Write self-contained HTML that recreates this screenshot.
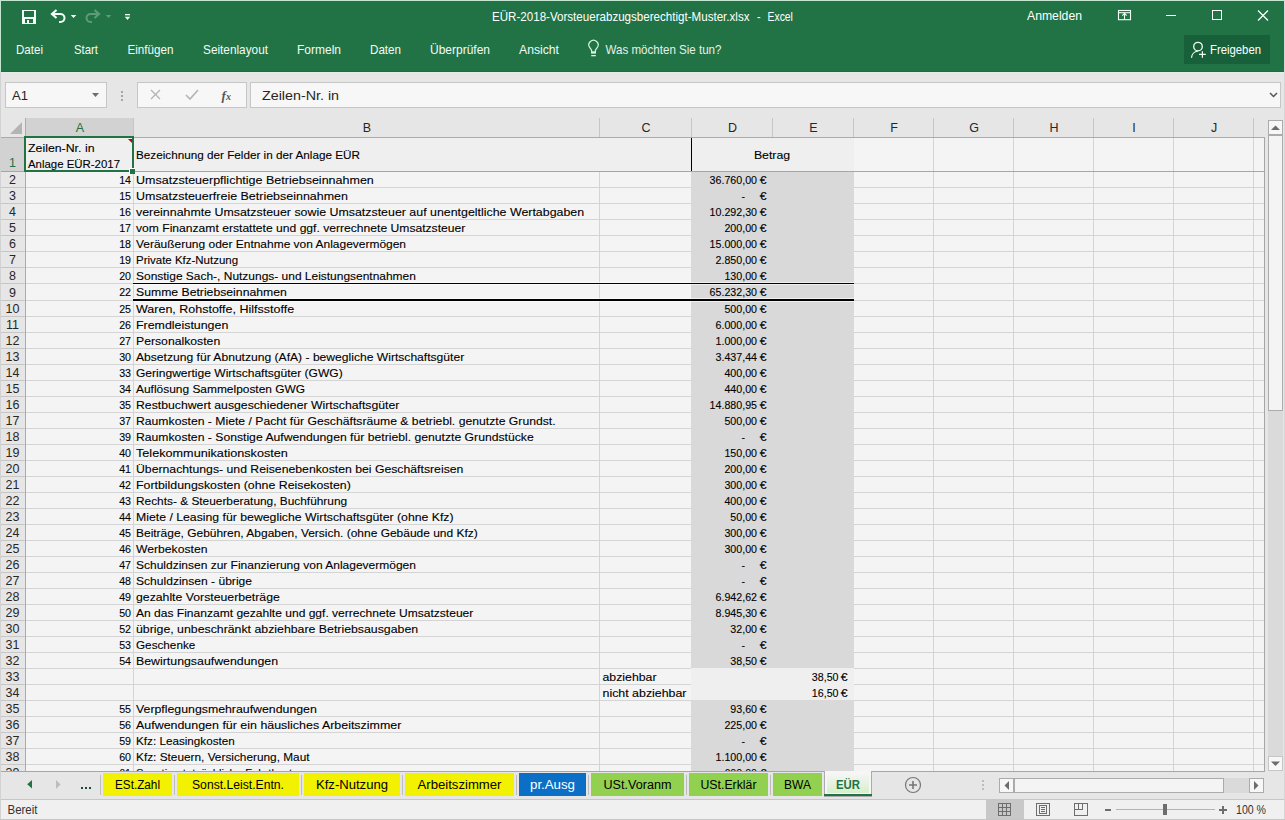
<!DOCTYPE html>
<html><head><meta charset="utf-8"><title>Excel</title>
<style>html,body{margin:0;padding:0;width:1285px;height:820px;overflow:hidden;background:#e6e6e6}
svg{display:block;font-family:"Liberation Sans",sans-serif}</style></head>
<body><svg width="1285" height="820" viewBox="0 0 1285 820">
<rect x="0" y="0" width="1285" height="820" fill="#e6e6e6" />
<rect x="0" y="0" width="1285" height="1" fill="#c3e6d0" />
<rect x="0" y="0" width="1" height="72" fill="#c3e6d0" />
<rect x="1" y="1" width="1283" height="71" fill="#217346" />
<rect x="1284" y="0" width="1" height="820" fill="#d6d6d6" />
<rect x="1" y="71" width="1283" height="1" fill="#1f6b42" />
<rect x="1" y="72" width="1283" height="1" fill="#e2efe6" />
<rect x="0" y="72" width="1" height="748" fill="#d2d2d2" />
<g shape-rendering="crispEdges"><rect x="22" y="10" width="14" height="14" fill="#f4fff8"/><rect x="24" y="11" width="10" height="6" fill="#217346"/><rect x="25" y="19" width="8" height="4" fill="#217346"/><rect x="27" y="20" width="2" height="3" fill="#f4fff8"/></g>
<path d="M52 14 h8.5 a4 4 0 0 1 0 8 h-1.5" fill="none" stroke="#f4fff8" stroke-width="2"/><path d="M56.5 10 L52 14 L56.5 18" fill="none" stroke="#f4fff8" stroke-width="2.2"/>
<path d="M70.8 15h5.5l-2.75 3z" fill="#f4fff8"/>
<path d="M99 14 h-8.5 a4 4 0 0 0 0 8 h1.5" fill="none" stroke="#5d9c77" stroke-width="2"/><path d="M94.5 10 L99 14 L94.5 18" fill="none" stroke="#5d9c77" stroke-width="2.2"/>
<path d="M105.8 15h5.5l-2.75 3z" fill="#5d9c77"/>
<rect x="125" y="14" width="5" height="1.3" fill="#f0fff5"/><path d="M124.8 16.8h5.4l-2.7 3.2z" fill="#f0fff5"/>
<text x="492" y="21" font-size="13" fill="#fff" textLength="257.5" lengthAdjust="spacingAndGlyphs" >EÜR-2018-Vorsteuerabzugsberechtigt-Muster.xlsx</text>
<text x="757" y="21" font-size="13" fill="#fff" textLength="3.6" lengthAdjust="spacingAndGlyphs" >-</text>
<text x="767.6" y="21" font-size="13" fill="#fff" textLength="25.3" lengthAdjust="spacingAndGlyphs" >Excel</text>
<text x="1027" y="20" font-size="13" fill="#fff" textLength="55" lengthAdjust="spacingAndGlyphs" >Anmelden</text>
<g fill="none" stroke="#f0fff5" stroke-width="1.1"><rect x="1118.5" y="10.5" width="12" height="9.2"/><path d="M1119 12.7h11"/><path d="M1124.5 19.5v-6.3 M1122.3 15.6l2.2-2.2 2.2 2.2"/></g>
<rect x="1166" y="15" width="10" height="1" fill="#fff" />
<rect x="1212.5" y="10.5" width="9" height="9" fill="none" stroke="#fff"/>
<path d="M1258 10.5 L1268 20.5 M1268 10.5 L1258 20.5" stroke="#fff" stroke-width="1.2"/>
<text x="16" y="54" font-size="13" fill="#f2fbf5" textLength="27" lengthAdjust="spacingAndGlyphs" >Datei</text>
<text x="74" y="54" font-size="13" fill="#f2fbf5" textLength="24" lengthAdjust="spacingAndGlyphs" >Start</text>
<text x="127.5" y="54" font-size="13" fill="#f2fbf5" textLength="46.0" lengthAdjust="spacingAndGlyphs" >Einfügen</text>
<text x="203" y="54" font-size="13" fill="#f2fbf5" textLength="65" lengthAdjust="spacingAndGlyphs" >Seitenlayout</text>
<text x="297" y="54" font-size="13" fill="#f2fbf5" textLength="44" lengthAdjust="spacingAndGlyphs" >Formeln</text>
<text x="370" y="54" font-size="13" fill="#f2fbf5" textLength="31" lengthAdjust="spacingAndGlyphs" >Daten</text>
<text x="430" y="54" font-size="13" fill="#f2fbf5" textLength="60" lengthAdjust="spacingAndGlyphs" >Überprüfen</text>
<text x="519" y="54" font-size="13" fill="#f2fbf5" textLength="40" lengthAdjust="spacingAndGlyphs" >Ansicht</text>
<path d="M591.6 52 V50.2 L589.8 47.6 A4.6 4.6 0 1 1 597.2 47.6 L595.4 50.2 V52 Z" fill="none" stroke="#d8f5e3" stroke-width="1.2"/><rect x="591" y="51.6" width="5" height="2" fill="#d8f5e3"/><rect x="591.2" y="55" width="4.6" height="1.3" fill="#d8f5e3"/>
<text x="605.5" y="54" font-size="13" fill="#e8f0ea" textLength="116" lengthAdjust="spacingAndGlyphs" >Was möchten Sie tun?</text>
<rect x="1184" y="35" width="86" height="29" fill="#17603a" />
<circle cx="1198" cy="46.6" r="4.3" fill="none" stroke="#effff4" stroke-width="1.3"/><path d="M1191.5 57.8 A7 7 0 0 1 1197.8 51.2" fill="none" stroke="#effff4" stroke-width="1.3"/><path d="M1202.4 51.2v6.6 M1199 54.4h6.8" stroke="#effff4" stroke-width="1.2"/>
<text x="1210" y="54" font-size="13" fill="#fff" textLength="51" lengthAdjust="spacingAndGlyphs" >Freigeben</text>
<rect x="5" y="82" width="102" height="26" fill="#c6c6c6" />
<rect x="6" y="83" width="100" height="24" fill="#f7f7f7" />
<text x="12" y="100" font-size="13" fill="#262626" textLength="16" lengthAdjust="spacingAndGlyphs" >A1</text>
<path d="M92 93h7l-3.5 4z" fill="#6d6d6d"/>
<rect x="121" y="91" width="2" height="2" fill="#a6a6a6" />
<rect x="121" y="95" width="2" height="2" fill="#a6a6a6" />
<rect x="121" y="99" width="2" height="2" fill="#a6a6a6" />
<rect x="137" y="82" width="110" height="26" fill="#c6c6c6" />
<rect x="138" y="83" width="108" height="24" fill="#f7f7f7" />
<path d="M151 90 L160 99 M160 90 L151 99" stroke="#b4b4b4" stroke-width="1.3"/>
<path d="M186 95 L190 99 L198 90" fill="none" stroke="#b4b4b4" stroke-width="1.6"/>
<text x="221.5" y="100" font-family="Liberation Serif" font-style="italic" font-weight="bold" font-size="13" fill="#555">f</text><text x="226" y="100" font-family="Liberation Serif" font-style="italic" font-weight="bold" font-size="10" fill="#555">x</text>
<rect x="250" y="82" width="1031" height="26" fill="#c6c6c6" />
<rect x="251" y="83" width="1029" height="24" fill="#f7f7f7" />
<text x="262" y="100" font-size="13" fill="#262626" textLength="77" lengthAdjust="spacingAndGlyphs" >Zeilen-Nr. in</text>
<path d="M1270 93l3.5 3.5 3.5-3.5" fill="none" stroke="#555" stroke-width="1.5"/>
<rect x="1" y="118" width="1263" height="19" fill="#e6e6e6" />
<rect x="25" y="118" width="108" height="19" fill="#d2d2d2" />
<path d="M22 122 L22 134 L10 134 Z" fill="#b4b4b4"/>
<rect x="1" y="138" width="1263" height="633" fill="#f4f4f4" />
<rect x="1" y="138" width="24" height="633" fill="#e6e6e6" />
<rect x="1" y="138" width="24" height="33" fill="#d2d2d2" />
<rect x="26" y="138" width="665" height="33" fill="#efefef" />
<rect x="692" y="138" width="162" height="33" fill="#efefef" />
<rect x="691" y="172" width="163" height="496" fill="#d9d9d9" />
<rect x="691" y="700" width="163" height="71" fill="#d9d9d9" />
<rect x="691" y="668" width="163" height="32" fill="#efefef" />
<rect x="26" y="187" width="665" height="1" fill="#d4d4d4" />
<rect x="854" y="187" width="410" height="1" fill="#d4d4d4" />
<rect x="1" y="187" width="24" height="1" fill="#c6c6c6" />
<rect x="26" y="203" width="665" height="1" fill="#d4d4d4" />
<rect x="854" y="203" width="410" height="1" fill="#d4d4d4" />
<rect x="1" y="203" width="24" height="1" fill="#c6c6c6" />
<rect x="26" y="219" width="665" height="1" fill="#d4d4d4" />
<rect x="854" y="219" width="410" height="1" fill="#d4d4d4" />
<rect x="1" y="219" width="24" height="1" fill="#c6c6c6" />
<rect x="26" y="235" width="665" height="1" fill="#d4d4d4" />
<rect x="854" y="235" width="410" height="1" fill="#d4d4d4" />
<rect x="1" y="235" width="24" height="1" fill="#c6c6c6" />
<rect x="26" y="251" width="665" height="1" fill="#d4d4d4" />
<rect x="854" y="251" width="410" height="1" fill="#d4d4d4" />
<rect x="1" y="251" width="24" height="1" fill="#c6c6c6" />
<rect x="26" y="267" width="665" height="1" fill="#d4d4d4" />
<rect x="854" y="267" width="410" height="1" fill="#d4d4d4" />
<rect x="1" y="267" width="24" height="1" fill="#c6c6c6" />
<rect x="26" y="283" width="665" height="1" fill="#d4d4d4" />
<rect x="854" y="283" width="410" height="1" fill="#d4d4d4" />
<rect x="1" y="283" width="24" height="1" fill="#c6c6c6" />
<rect x="26" y="300" width="665" height="1" fill="#d4d4d4" />
<rect x="854" y="300" width="410" height="1" fill="#d4d4d4" />
<rect x="1" y="300" width="24" height="1" fill="#c6c6c6" />
<rect x="26" y="316" width="665" height="1" fill="#d4d4d4" />
<rect x="854" y="316" width="410" height="1" fill="#d4d4d4" />
<rect x="1" y="316" width="24" height="1" fill="#c6c6c6" />
<rect x="26" y="332" width="665" height="1" fill="#d4d4d4" />
<rect x="854" y="332" width="410" height="1" fill="#d4d4d4" />
<rect x="1" y="332" width="24" height="1" fill="#c6c6c6" />
<rect x="26" y="348" width="665" height="1" fill="#d4d4d4" />
<rect x="854" y="348" width="410" height="1" fill="#d4d4d4" />
<rect x="1" y="348" width="24" height="1" fill="#c6c6c6" />
<rect x="26" y="364" width="665" height="1" fill="#d4d4d4" />
<rect x="854" y="364" width="410" height="1" fill="#d4d4d4" />
<rect x="1" y="364" width="24" height="1" fill="#c6c6c6" />
<rect x="26" y="380" width="665" height="1" fill="#d4d4d4" />
<rect x="854" y="380" width="410" height="1" fill="#d4d4d4" />
<rect x="1" y="380" width="24" height="1" fill="#c6c6c6" />
<rect x="26" y="396" width="665" height="1" fill="#d4d4d4" />
<rect x="854" y="396" width="410" height="1" fill="#d4d4d4" />
<rect x="1" y="396" width="24" height="1" fill="#c6c6c6" />
<rect x="26" y="412" width="665" height="1" fill="#d4d4d4" />
<rect x="854" y="412" width="410" height="1" fill="#d4d4d4" />
<rect x="1" y="412" width="24" height="1" fill="#c6c6c6" />
<rect x="26" y="428" width="665" height="1" fill="#d4d4d4" />
<rect x="854" y="428" width="410" height="1" fill="#d4d4d4" />
<rect x="1" y="428" width="24" height="1" fill="#c6c6c6" />
<rect x="26" y="444" width="665" height="1" fill="#d4d4d4" />
<rect x="854" y="444" width="410" height="1" fill="#d4d4d4" />
<rect x="1" y="444" width="24" height="1" fill="#c6c6c6" />
<rect x="26" y="460" width="665" height="1" fill="#d4d4d4" />
<rect x="854" y="460" width="410" height="1" fill="#d4d4d4" />
<rect x="1" y="460" width="24" height="1" fill="#c6c6c6" />
<rect x="26" y="476" width="665" height="1" fill="#d4d4d4" />
<rect x="854" y="476" width="410" height="1" fill="#d4d4d4" />
<rect x="1" y="476" width="24" height="1" fill="#c6c6c6" />
<rect x="26" y="492" width="665" height="1" fill="#d4d4d4" />
<rect x="854" y="492" width="410" height="1" fill="#d4d4d4" />
<rect x="1" y="492" width="24" height="1" fill="#c6c6c6" />
<rect x="26" y="508" width="665" height="1" fill="#d4d4d4" />
<rect x="854" y="508" width="410" height="1" fill="#d4d4d4" />
<rect x="1" y="508" width="24" height="1" fill="#c6c6c6" />
<rect x="26" y="524" width="665" height="1" fill="#d4d4d4" />
<rect x="854" y="524" width="410" height="1" fill="#d4d4d4" />
<rect x="1" y="524" width="24" height="1" fill="#c6c6c6" />
<rect x="26" y="540" width="665" height="1" fill="#d4d4d4" />
<rect x="854" y="540" width="410" height="1" fill="#d4d4d4" />
<rect x="1" y="540" width="24" height="1" fill="#c6c6c6" />
<rect x="26" y="556" width="665" height="1" fill="#d4d4d4" />
<rect x="854" y="556" width="410" height="1" fill="#d4d4d4" />
<rect x="1" y="556" width="24" height="1" fill="#c6c6c6" />
<rect x="26" y="572" width="665" height="1" fill="#d4d4d4" />
<rect x="854" y="572" width="410" height="1" fill="#d4d4d4" />
<rect x="1" y="572" width="24" height="1" fill="#c6c6c6" />
<rect x="26" y="588" width="665" height="1" fill="#d4d4d4" />
<rect x="854" y="588" width="410" height="1" fill="#d4d4d4" />
<rect x="1" y="588" width="24" height="1" fill="#c6c6c6" />
<rect x="26" y="604" width="665" height="1" fill="#d4d4d4" />
<rect x="854" y="604" width="410" height="1" fill="#d4d4d4" />
<rect x="1" y="604" width="24" height="1" fill="#c6c6c6" />
<rect x="26" y="620" width="665" height="1" fill="#d4d4d4" />
<rect x="854" y="620" width="410" height="1" fill="#d4d4d4" />
<rect x="1" y="620" width="24" height="1" fill="#c6c6c6" />
<rect x="26" y="636" width="665" height="1" fill="#d4d4d4" />
<rect x="854" y="636" width="410" height="1" fill="#d4d4d4" />
<rect x="1" y="636" width="24" height="1" fill="#c6c6c6" />
<rect x="26" y="652" width="665" height="1" fill="#d4d4d4" />
<rect x="854" y="652" width="410" height="1" fill="#d4d4d4" />
<rect x="1" y="652" width="24" height="1" fill="#c6c6c6" />
<rect x="26" y="668" width="665" height="1" fill="#d4d4d4" />
<rect x="854" y="668" width="410" height="1" fill="#d4d4d4" />
<rect x="1" y="668" width="24" height="1" fill="#c6c6c6" />
<rect x="26" y="684" width="665" height="1" fill="#d4d4d4" />
<rect x="854" y="684" width="410" height="1" fill="#d4d4d4" />
<rect x="1" y="684" width="24" height="1" fill="#c6c6c6" />
<rect x="26" y="700" width="665" height="1" fill="#d4d4d4" />
<rect x="854" y="700" width="410" height="1" fill="#d4d4d4" />
<rect x="1" y="700" width="24" height="1" fill="#c6c6c6" />
<rect x="26" y="716" width="665" height="1" fill="#d4d4d4" />
<rect x="854" y="716" width="410" height="1" fill="#d4d4d4" />
<rect x="1" y="716" width="24" height="1" fill="#c6c6c6" />
<rect x="26" y="732" width="665" height="1" fill="#d4d4d4" />
<rect x="854" y="732" width="410" height="1" fill="#d4d4d4" />
<rect x="1" y="732" width="24" height="1" fill="#c6c6c6" />
<rect x="26" y="748" width="665" height="1" fill="#d4d4d4" />
<rect x="854" y="748" width="410" height="1" fill="#d4d4d4" />
<rect x="1" y="748" width="24" height="1" fill="#c6c6c6" />
<rect x="26" y="764" width="665" height="1" fill="#d4d4d4" />
<rect x="854" y="764" width="410" height="1" fill="#d4d4d4" />
<rect x="1" y="764" width="24" height="1" fill="#c6c6c6" />
<rect x="133" y="138" width="1" height="633" fill="#d4d4d4" />
<rect x="599" y="172" width="1" height="599" fill="#d4d4d4" />
<rect x="933" y="138" width="1" height="633" fill="#d4d4d4" />
<rect x="1013" y="138" width="1" height="633" fill="#d4d4d4" />
<rect x="1093" y="138" width="1" height="633" fill="#d4d4d4" />
<rect x="1173" y="138" width="1" height="633" fill="#d4d4d4" />
<rect x="1253" y="138" width="1" height="633" fill="#d4d4d4" />
<rect x="133" y="118" width="1" height="19" fill="#c6c6c6" />
<rect x="599" y="118" width="1" height="19" fill="#c6c6c6" />
<rect x="691" y="118" width="1" height="19" fill="#c6c6c6" />
<rect x="772" y="118" width="1" height="19" fill="#c6c6c6" />
<rect x="853" y="118" width="1" height="19" fill="#c6c6c6" />
<rect x="933" y="118" width="1" height="19" fill="#c6c6c6" />
<rect x="1013" y="118" width="1" height="19" fill="#c6c6c6" />
<rect x="1093" y="118" width="1" height="19" fill="#c6c6c6" />
<rect x="1173" y="118" width="1" height="19" fill="#c6c6c6" />
<rect x="1253" y="118" width="1" height="19" fill="#c6c6c6" />
<rect x="25" y="118" width="1" height="653" fill="#ababab" />
<rect x="1" y="137" width="1263" height="1" fill="#ababab" />
<rect x="1" y="171" width="1263" height="1" fill="#a6a6a6" />
<rect x="1264" y="137" width="1" height="635" fill="#a6a6a6" />
<rect x="1" y="771" width="1264" height="1" fill="#a6a6a6" />
<rect x="691" y="138" width="1" height="33" fill="#000" />
<rect x="133" y="282" width="721" height="1" fill="#ffffff" fill-opacity="0.6"/>
<rect x="133" y="284" width="721" height="1" fill="#ffffff" fill-opacity="0.6"/>
<rect x="133" y="298" width="721" height="1" fill="#ffffff" fill-opacity="0.6"/>
<rect x="133" y="301" width="721" height="1" fill="#ffffff" fill-opacity="0.6"/>
<rect x="133" y="283" width="721" height="1" fill="#000" />
<rect x="133" y="299" width="721" height="2" fill="#000" />
<text x="80.0" y="132" font-size="12.5" fill="#217346" text-anchor="middle" >A</text>
<text x="367.0" y="132" font-size="12.5" fill="#262626" text-anchor="middle" >B</text>
<text x="646.0" y="132" font-size="12.5" fill="#262626" text-anchor="middle" >C</text>
<text x="732.5" y="132" font-size="12.5" fill="#262626" text-anchor="middle" >D</text>
<text x="813.5" y="132" font-size="12.5" fill="#262626" text-anchor="middle" >E</text>
<text x="894.0" y="132" font-size="12.5" fill="#262626" text-anchor="middle" >F</text>
<text x="974.0" y="132" font-size="12.5" fill="#262626" text-anchor="middle" >G</text>
<text x="1054.0" y="132" font-size="12.5" fill="#262626" text-anchor="middle" >H</text>
<text x="1134.0" y="132" font-size="12.5" fill="#262626" text-anchor="middle" >I</text>
<text x="1214.0" y="132" font-size="12.5" fill="#262626" text-anchor="middle" >J</text>
<text x="12.5" y="167" font-size="12.5" fill="#217346" text-anchor="middle" >1</text>
<text x="12.5" y="184" font-size="12.5" fill="#262626" text-anchor="middle" >2</text>
<text x="12.5" y="200" font-size="12.5" fill="#262626" text-anchor="middle" >3</text>
<text x="12.5" y="216" font-size="12.5" fill="#262626" text-anchor="middle" >4</text>
<text x="12.5" y="232" font-size="12.5" fill="#262626" text-anchor="middle" >5</text>
<text x="12.5" y="248" font-size="12.5" fill="#262626" text-anchor="middle" >6</text>
<text x="12.5" y="264" font-size="12.5" fill="#262626" text-anchor="middle" >7</text>
<text x="12.5" y="280" font-size="12.5" fill="#262626" text-anchor="middle" >8</text>
<text x="12.5" y="297" font-size="12.5" fill="#262626" text-anchor="middle" >9</text>
<text x="12.5" y="313" font-size="12.5" fill="#262626" text-anchor="middle" >10</text>
<text x="12.5" y="329" font-size="12.5" fill="#262626" text-anchor="middle" >11</text>
<text x="12.5" y="345" font-size="12.5" fill="#262626" text-anchor="middle" >12</text>
<text x="12.5" y="361" font-size="12.5" fill="#262626" text-anchor="middle" >13</text>
<text x="12.5" y="377" font-size="12.5" fill="#262626" text-anchor="middle" >14</text>
<text x="12.5" y="393" font-size="12.5" fill="#262626" text-anchor="middle" >15</text>
<text x="12.5" y="409" font-size="12.5" fill="#262626" text-anchor="middle" >16</text>
<text x="12.5" y="425" font-size="12.5" fill="#262626" text-anchor="middle" >17</text>
<text x="12.5" y="441" font-size="12.5" fill="#262626" text-anchor="middle" >18</text>
<text x="12.5" y="457" font-size="12.5" fill="#262626" text-anchor="middle" >19</text>
<text x="12.5" y="473" font-size="12.5" fill="#262626" text-anchor="middle" >20</text>
<text x="12.5" y="489" font-size="12.5" fill="#262626" text-anchor="middle" >21</text>
<text x="12.5" y="505" font-size="12.5" fill="#262626" text-anchor="middle" >22</text>
<text x="12.5" y="521" font-size="12.5" fill="#262626" text-anchor="middle" >23</text>
<text x="12.5" y="537" font-size="12.5" fill="#262626" text-anchor="middle" >24</text>
<text x="12.5" y="553" font-size="12.5" fill="#262626" text-anchor="middle" >25</text>
<text x="12.5" y="569" font-size="12.5" fill="#262626" text-anchor="middle" >26</text>
<text x="12.5" y="585" font-size="12.5" fill="#262626" text-anchor="middle" >27</text>
<text x="12.5" y="601" font-size="12.5" fill="#262626" text-anchor="middle" >28</text>
<text x="12.5" y="617" font-size="12.5" fill="#262626" text-anchor="middle" >29</text>
<text x="12.5" y="633" font-size="12.5" fill="#262626" text-anchor="middle" >30</text>
<text x="12.5" y="649" font-size="12.5" fill="#262626" text-anchor="middle" >31</text>
<text x="12.5" y="665" font-size="12.5" fill="#262626" text-anchor="middle" >32</text>
<text x="12.5" y="681" font-size="12.5" fill="#262626" text-anchor="middle" >33</text>
<text x="12.5" y="697" font-size="12.5" fill="#262626" text-anchor="middle" >34</text>
<text x="12.5" y="713" font-size="12.5" fill="#262626" text-anchor="middle" >35</text>
<text x="12.5" y="729" font-size="12.5" fill="#262626" text-anchor="middle" >36</text>
<text x="12.5" y="745" font-size="12.5" fill="#262626" text-anchor="middle" >37</text>
<text x="12.5" y="761" font-size="12.5" fill="#262626" text-anchor="middle" >38</text>
<text x="12.5" y="777" font-size="12.5" fill="#262626" text-anchor="middle" >39</text>
<text transform="translate(131 184) scale(0.97 1)" font-size="11" fill="#000" text-anchor="end" stroke="#000" stroke-width="0.1">14</text>
<text x="136" y="184" font-size="11" fill="#000" textLength="237.8" lengthAdjust="spacingAndGlyphs" stroke="#000" stroke-width="0.1">Umsatzsteuerpflichtige Betriebseinnahmen</text>
<text transform="translate(766.5 184) scale(1.12 1)" font-size="11" fill="#000" text-anchor="end" stroke="#000" stroke-width="0.1">€</text>
<text transform="translate(757 184) scale(0.97 1)" font-size="11" fill="#000" text-anchor="end" stroke="#000" stroke-width="0.1">36.760,00</text>
<text transform="translate(131 200) scale(0.97 1)" font-size="11" fill="#000" text-anchor="end" stroke="#000" stroke-width="0.1">15</text>
<text x="136" y="200" font-size="11" fill="#000" textLength="211.9" lengthAdjust="spacingAndGlyphs" stroke="#000" stroke-width="0.1">Umsatzsteuerfreie Betriebseinnahmen</text>
<text transform="translate(766.5 200) scale(1.12 1)" font-size="11" fill="#000" text-anchor="end" stroke="#000" stroke-width="0.1">€</text>
<text transform="translate(745 200) scale(0.97 1)" font-size="11" fill="#000" text-anchor="end" stroke="#000" stroke-width="0.1">-</text>
<text transform="translate(131 216) scale(0.97 1)" font-size="11" fill="#000" text-anchor="end" stroke="#000" stroke-width="0.1">16</text>
<text x="136" y="216" font-size="11" fill="#000" textLength="448.1" lengthAdjust="spacingAndGlyphs" stroke="#000" stroke-width="0.1">vereinnahmte Umsatzsteuer sowie Umsatzsteuer auf unentgeltliche Wertabgaben</text>
<text transform="translate(766.5 216) scale(1.12 1)" font-size="11" fill="#000" text-anchor="end" stroke="#000" stroke-width="0.1">€</text>
<text transform="translate(757 216) scale(0.97 1)" font-size="11" fill="#000" text-anchor="end" stroke="#000" stroke-width="0.1">10.292,30</text>
<text transform="translate(131 232) scale(0.97 1)" font-size="11" fill="#000" text-anchor="end" stroke="#000" stroke-width="0.1">17</text>
<text x="136" y="232" font-size="11" fill="#000" textLength="329.3" lengthAdjust="spacingAndGlyphs" stroke="#000" stroke-width="0.1">vom Finanzamt erstattete und ggf. verrechnete Umsatzsteuer</text>
<text transform="translate(766.5 232) scale(1.12 1)" font-size="11" fill="#000" text-anchor="end" stroke="#000" stroke-width="0.1">€</text>
<text transform="translate(757 232) scale(0.97 1)" font-size="11" fill="#000" text-anchor="end" stroke="#000" stroke-width="0.1">200,00</text>
<text transform="translate(131 248) scale(0.97 1)" font-size="11" fill="#000" text-anchor="end" stroke="#000" stroke-width="0.1">18</text>
<text x="136" y="248" font-size="11" fill="#000" textLength="270.0" lengthAdjust="spacingAndGlyphs" stroke="#000" stroke-width="0.1">Veräußerung oder Entnahme von Anlagevermögen</text>
<text transform="translate(766.5 248) scale(1.12 1)" font-size="11" fill="#000" text-anchor="end" stroke="#000" stroke-width="0.1">€</text>
<text transform="translate(757 248) scale(0.97 1)" font-size="11" fill="#000" text-anchor="end" stroke="#000" stroke-width="0.1">15.000,00</text>
<text transform="translate(131 264) scale(0.97 1)" font-size="11" fill="#000" text-anchor="end" stroke="#000" stroke-width="0.1">19</text>
<text x="136" y="264" font-size="11" fill="#000" textLength="102.1" lengthAdjust="spacingAndGlyphs" stroke="#000" stroke-width="0.1">Private Kfz-Nutzung</text>
<text transform="translate(766.5 264) scale(1.12 1)" font-size="11" fill="#000" text-anchor="end" stroke="#000" stroke-width="0.1">€</text>
<text transform="translate(757 264) scale(0.97 1)" font-size="11" fill="#000" text-anchor="end" stroke="#000" stroke-width="0.1">2.850,00</text>
<text transform="translate(131 280) scale(0.97 1)" font-size="11" fill="#000" text-anchor="end" stroke="#000" stroke-width="0.1">20</text>
<text x="136" y="280" font-size="11" fill="#000" textLength="279.9" lengthAdjust="spacingAndGlyphs" stroke="#000" stroke-width="0.1">Sonstige Sach-, Nutzungs- und Leistungsentnahmen</text>
<text transform="translate(766.5 280) scale(1.12 1)" font-size="11" fill="#000" text-anchor="end" stroke="#000" stroke-width="0.1">€</text>
<text transform="translate(757 280) scale(0.97 1)" font-size="11" fill="#000" text-anchor="end" stroke="#000" stroke-width="0.1">130,00</text>
<text transform="translate(131 296) scale(0.97 1)" font-size="11" fill="#000" text-anchor="end" stroke="#000" stroke-width="0.1">22</text>
<text x="136" y="296" font-size="11" fill="#000" textLength="150.8" lengthAdjust="spacingAndGlyphs" stroke="#000" stroke-width="0.1">Summe Betriebseinnahmen</text>
<text transform="translate(766.5 296) scale(1.12 1)" font-size="11" fill="#000" text-anchor="end" stroke="#000" stroke-width="0.1">€</text>
<text transform="translate(757 296) scale(0.97 1)" font-size="11" fill="#000" text-anchor="end" stroke="#000" stroke-width="0.1">65.232,30</text>
<text transform="translate(131 313) scale(0.97 1)" font-size="11" fill="#000" text-anchor="end" stroke="#000" stroke-width="0.1">25</text>
<text x="136" y="313" font-size="11" fill="#000" textLength="158.1" lengthAdjust="spacingAndGlyphs" stroke="#000" stroke-width="0.1">Waren, Rohstoffe, Hilfsstoffe</text>
<text transform="translate(766.5 313) scale(1.12 1)" font-size="11" fill="#000" text-anchor="end" stroke="#000" stroke-width="0.1">€</text>
<text transform="translate(757 313) scale(0.97 1)" font-size="11" fill="#000" text-anchor="end" stroke="#000" stroke-width="0.1">500,00</text>
<text transform="translate(131 329) scale(0.97 1)" font-size="11" fill="#000" text-anchor="end" stroke="#000" stroke-width="0.1">26</text>
<text x="136" y="329" font-size="11" fill="#000" textLength="92.3" lengthAdjust="spacingAndGlyphs" stroke="#000" stroke-width="0.1">Fremdleistungen</text>
<text transform="translate(766.5 329) scale(1.12 1)" font-size="11" fill="#000" text-anchor="end" stroke="#000" stroke-width="0.1">€</text>
<text transform="translate(757 329) scale(0.97 1)" font-size="11" fill="#000" text-anchor="end" stroke="#000" stroke-width="0.1">6.000,00</text>
<text transform="translate(131 345) scale(0.97 1)" font-size="11" fill="#000" text-anchor="end" stroke="#000" stroke-width="0.1">27</text>
<text x="136" y="345" font-size="11" fill="#000" textLength="84.2" lengthAdjust="spacingAndGlyphs" stroke="#000" stroke-width="0.1">Personalkosten</text>
<text transform="translate(766.5 345) scale(1.12 1)" font-size="11" fill="#000" text-anchor="end" stroke="#000" stroke-width="0.1">€</text>
<text transform="translate(757 345) scale(0.97 1)" font-size="11" fill="#000" text-anchor="end" stroke="#000" stroke-width="0.1">1.000,00</text>
<text transform="translate(131 361) scale(0.97 1)" font-size="11" fill="#000" text-anchor="end" stroke="#000" stroke-width="0.1">30</text>
<text x="136" y="361" font-size="11" fill="#000" textLength="328.2" lengthAdjust="spacingAndGlyphs" stroke="#000" stroke-width="0.1">Absetzung für Abnutzung (AfA) - bewegliche Wirtschaftsgüter</text>
<text transform="translate(766.5 361) scale(1.12 1)" font-size="11" fill="#000" text-anchor="end" stroke="#000" stroke-width="0.1">€</text>
<text transform="translate(757 361) scale(0.97 1)" font-size="11" fill="#000" text-anchor="end" stroke="#000" stroke-width="0.1">3.437,44</text>
<text transform="translate(131 377) scale(0.97 1)" font-size="11" fill="#000" text-anchor="end" stroke="#000" stroke-width="0.1">33</text>
<text x="136" y="377" font-size="11" fill="#000" textLength="206.7" lengthAdjust="spacingAndGlyphs" stroke="#000" stroke-width="0.1">Geringwertige Wirtschaftsgüter (GWG)</text>
<text transform="translate(766.5 377) scale(1.12 1)" font-size="11" fill="#000" text-anchor="end" stroke="#000" stroke-width="0.1">€</text>
<text transform="translate(757 377) scale(0.97 1)" font-size="11" fill="#000" text-anchor="end" stroke="#000" stroke-width="0.1">400,00</text>
<text transform="translate(131 393) scale(0.97 1)" font-size="11" fill="#000" text-anchor="end" stroke="#000" stroke-width="0.1">34</text>
<text x="136" y="393" font-size="11" fill="#000" textLength="169.1" lengthAdjust="spacingAndGlyphs" stroke="#000" stroke-width="0.1">Auflösung Sammelposten GWG</text>
<text transform="translate(766.5 393) scale(1.12 1)" font-size="11" fill="#000" text-anchor="end" stroke="#000" stroke-width="0.1">€</text>
<text transform="translate(757 393) scale(0.97 1)" font-size="11" fill="#000" text-anchor="end" stroke="#000" stroke-width="0.1">440,00</text>
<text transform="translate(131 409) scale(0.97 1)" font-size="11" fill="#000" text-anchor="end" stroke="#000" stroke-width="0.1">35</text>
<text x="136" y="409" font-size="11" fill="#000" textLength="263.4" lengthAdjust="spacingAndGlyphs" stroke="#000" stroke-width="0.1">Restbuchwert ausgeschiedener Wirtschaftsgüter</text>
<text transform="translate(766.5 409) scale(1.12 1)" font-size="11" fill="#000" text-anchor="end" stroke="#000" stroke-width="0.1">€</text>
<text transform="translate(757 409) scale(0.97 1)" font-size="11" fill="#000" text-anchor="end" stroke="#000" stroke-width="0.1">14.880,95</text>
<text transform="translate(131 425) scale(0.97 1)" font-size="11" fill="#000" text-anchor="end" stroke="#000" stroke-width="0.1">37</text>
<text x="136" y="425" font-size="11" fill="#000" textLength="419.6" lengthAdjust="spacingAndGlyphs" stroke="#000" stroke-width="0.1">Raumkosten - Miete / Pacht für Geschäftsräume &amp; betriebl. genutzte Grundst.</text>
<text transform="translate(766.5 425) scale(1.12 1)" font-size="11" fill="#000" text-anchor="end" stroke="#000" stroke-width="0.1">€</text>
<text transform="translate(757 425) scale(0.97 1)" font-size="11" fill="#000" text-anchor="end" stroke="#000" stroke-width="0.1">500,00</text>
<text transform="translate(131 441) scale(0.97 1)" font-size="11" fill="#000" text-anchor="end" stroke="#000" stroke-width="0.1">39</text>
<text x="136" y="441" font-size="11" fill="#000" textLength="397.7" lengthAdjust="spacingAndGlyphs" stroke="#000" stroke-width="0.1">Raumkosten - Sonstige Aufwendungen für betriebl. genutzte Grundstücke</text>
<text transform="translate(766.5 441) scale(1.12 1)" font-size="11" fill="#000" text-anchor="end" stroke="#000" stroke-width="0.1">€</text>
<text transform="translate(745 441) scale(0.97 1)" font-size="11" fill="#000" text-anchor="end" stroke="#000" stroke-width="0.1">-</text>
<text transform="translate(131 457) scale(0.97 1)" font-size="11" fill="#000" text-anchor="end" stroke="#000" stroke-width="0.1">40</text>
<text x="136" y="457" font-size="11" fill="#000" textLength="151.9" lengthAdjust="spacingAndGlyphs" stroke="#000" stroke-width="0.1">Telekommunikationskosten</text>
<text transform="translate(766.5 457) scale(1.12 1)" font-size="11" fill="#000" text-anchor="end" stroke="#000" stroke-width="0.1">€</text>
<text transform="translate(757 457) scale(0.97 1)" font-size="11" fill="#000" text-anchor="end" stroke="#000" stroke-width="0.1">150,00</text>
<text transform="translate(131 473) scale(0.97 1)" font-size="11" fill="#000" text-anchor="end" stroke="#000" stroke-width="0.1">41</text>
<text x="136" y="473" font-size="11" fill="#000" textLength="327.4" lengthAdjust="spacingAndGlyphs" stroke="#000" stroke-width="0.1">Übernachtungs- und Reisenebenkosten bei Geschäftsreisen</text>
<text transform="translate(766.5 473) scale(1.12 1)" font-size="11" fill="#000" text-anchor="end" stroke="#000" stroke-width="0.1">€</text>
<text transform="translate(757 473) scale(0.97 1)" font-size="11" fill="#000" text-anchor="end" stroke="#000" stroke-width="0.1">200,00</text>
<text transform="translate(131 489) scale(0.97 1)" font-size="11" fill="#000" text-anchor="end" stroke="#000" stroke-width="0.1">42</text>
<text x="136" y="489" font-size="11" fill="#000" textLength="214.8" lengthAdjust="spacingAndGlyphs" stroke="#000" stroke-width="0.1">Fortbildungskosten (ohne Reisekosten)</text>
<text transform="translate(766.5 489) scale(1.12 1)" font-size="11" fill="#000" text-anchor="end" stroke="#000" stroke-width="0.1">€</text>
<text transform="translate(757 489) scale(0.97 1)" font-size="11" fill="#000" text-anchor="end" stroke="#000" stroke-width="0.1">300,00</text>
<text transform="translate(131 505) scale(0.97 1)" font-size="11" fill="#000" text-anchor="end" stroke="#000" stroke-width="0.1">43</text>
<text x="136" y="505" font-size="11" fill="#000" textLength="211.1" lengthAdjust="spacingAndGlyphs" stroke="#000" stroke-width="0.1">Rechts- &amp; Steuerberatung, Buchführung</text>
<text transform="translate(766.5 505) scale(1.12 1)" font-size="11" fill="#000" text-anchor="end" stroke="#000" stroke-width="0.1">€</text>
<text transform="translate(757 505) scale(0.97 1)" font-size="11" fill="#000" text-anchor="end" stroke="#000" stroke-width="0.1">400,00</text>
<text transform="translate(131 521) scale(0.97 1)" font-size="11" fill="#000" text-anchor="end" stroke="#000" stroke-width="0.1">44</text>
<text x="136" y="521" font-size="11" fill="#000" textLength="317.6" lengthAdjust="spacingAndGlyphs" stroke="#000" stroke-width="0.1">Miete / Leasing für bewegliche Wirtschaftsgüter (ohne Kfz)</text>
<text transform="translate(766.5 521) scale(1.12 1)" font-size="11" fill="#000" text-anchor="end" stroke="#000" stroke-width="0.1">€</text>
<text transform="translate(757 521) scale(0.97 1)" font-size="11" fill="#000" text-anchor="end" stroke="#000" stroke-width="0.1">50,00</text>
<text transform="translate(131 537) scale(0.97 1)" font-size="11" fill="#000" text-anchor="end" stroke="#000" stroke-width="0.1">45</text>
<text x="136" y="537" font-size="11" fill="#000" textLength="341.7" lengthAdjust="spacingAndGlyphs" stroke="#000" stroke-width="0.1">Beiträge, Gebühren, Abgaben, Versich. (ohne Gebäude und Kfz)</text>
<text transform="translate(766.5 537) scale(1.12 1)" font-size="11" fill="#000" text-anchor="end" stroke="#000" stroke-width="0.1">€</text>
<text transform="translate(757 537) scale(0.97 1)" font-size="11" fill="#000" text-anchor="end" stroke="#000" stroke-width="0.1">300,00</text>
<text transform="translate(131 553) scale(0.97 1)" font-size="11" fill="#000" text-anchor="end" stroke="#000" stroke-width="0.1">46</text>
<text x="136" y="553" font-size="11" fill="#000" textLength="71.4" lengthAdjust="spacingAndGlyphs" stroke="#000" stroke-width="0.1">Werbekosten</text>
<text transform="translate(766.5 553) scale(1.12 1)" font-size="11" fill="#000" text-anchor="end" stroke="#000" stroke-width="0.1">€</text>
<text transform="translate(757 553) scale(0.97 1)" font-size="11" fill="#000" text-anchor="end" stroke="#000" stroke-width="0.1">300,00</text>
<text transform="translate(131 569) scale(0.97 1)" font-size="11" fill="#000" text-anchor="end" stroke="#000" stroke-width="0.1">47</text>
<text x="136" y="569" font-size="11" fill="#000" textLength="279.9" lengthAdjust="spacingAndGlyphs" stroke="#000" stroke-width="0.1">Schuldzinsen zur Finanzierung von Anlagevermögen</text>
<text transform="translate(766.5 569) scale(1.12 1)" font-size="11" fill="#000" text-anchor="end" stroke="#000" stroke-width="0.1">€</text>
<text transform="translate(745 569) scale(0.97 1)" font-size="11" fill="#000" text-anchor="end" stroke="#000" stroke-width="0.1">-</text>
<text transform="translate(131 585) scale(0.97 1)" font-size="11" fill="#000" text-anchor="end" stroke="#000" stroke-width="0.1">48</text>
<text x="136" y="585" font-size="11" fill="#000" textLength="116.0" lengthAdjust="spacingAndGlyphs" stroke="#000" stroke-width="0.1">Schuldzinsen - übrige</text>
<text transform="translate(766.5 585) scale(1.12 1)" font-size="11" fill="#000" text-anchor="end" stroke="#000" stroke-width="0.1">€</text>
<text transform="translate(745 585) scale(0.97 1)" font-size="11" fill="#000" text-anchor="end" stroke="#000" stroke-width="0.1">-</text>
<text transform="translate(131 601) scale(0.97 1)" font-size="11" fill="#000" text-anchor="end" stroke="#000" stroke-width="0.1">49</text>
<text x="136" y="601" font-size="11" fill="#000" textLength="143.8" lengthAdjust="spacingAndGlyphs" stroke="#000" stroke-width="0.1">gezahlte Vorsteuerbeträge</text>
<text transform="translate(766.5 601) scale(1.12 1)" font-size="11" fill="#000" text-anchor="end" stroke="#000" stroke-width="0.1">€</text>
<text transform="translate(757 601) scale(0.97 1)" font-size="11" fill="#000" text-anchor="end" stroke="#000" stroke-width="0.1">6.942,62</text>
<text transform="translate(131 617) scale(0.97 1)" font-size="11" fill="#000" text-anchor="end" stroke="#000" stroke-width="0.1">50</text>
<text x="136" y="617" font-size="11" fill="#000" textLength="337.3" lengthAdjust="spacingAndGlyphs" stroke="#000" stroke-width="0.1">An das Finanzamt gezahlte und ggf. verrechnete Umsatzsteuer</text>
<text transform="translate(766.5 617) scale(1.12 1)" font-size="11" fill="#000" text-anchor="end" stroke="#000" stroke-width="0.1">€</text>
<text transform="translate(757 617) scale(0.97 1)" font-size="11" fill="#000" text-anchor="end" stroke="#000" stroke-width="0.1">8.945,30</text>
<text transform="translate(131 633) scale(0.97 1)" font-size="11" fill="#000" text-anchor="end" stroke="#000" stroke-width="0.1">52</text>
<text x="136" y="633" font-size="11" fill="#000" textLength="282.1" lengthAdjust="spacingAndGlyphs" stroke="#000" stroke-width="0.1">übrige, unbeschränkt abziehbare Betriebsausgaben</text>
<text transform="translate(766.5 633) scale(1.12 1)" font-size="11" fill="#000" text-anchor="end" stroke="#000" stroke-width="0.1">€</text>
<text transform="translate(757 633) scale(0.97 1)" font-size="11" fill="#000" text-anchor="end" stroke="#000" stroke-width="0.1">32,00</text>
<text transform="translate(131 649) scale(0.97 1)" font-size="11" fill="#000" text-anchor="end" stroke="#000" stroke-width="0.1">53</text>
<text x="136" y="649" font-size="11" fill="#000" textLength="59.3" lengthAdjust="spacingAndGlyphs" stroke="#000" stroke-width="0.1">Geschenke</text>
<text transform="translate(766.5 649) scale(1.12 1)" font-size="11" fill="#000" text-anchor="end" stroke="#000" stroke-width="0.1">€</text>
<text transform="translate(745 649) scale(0.97 1)" font-size="11" fill="#000" text-anchor="end" stroke="#000" stroke-width="0.1">-</text>
<text transform="translate(131 665) scale(0.97 1)" font-size="11" fill="#000" text-anchor="end" stroke="#000" stroke-width="0.1">54</text>
<text x="136" y="665" font-size="11" fill="#000" textLength="142.0" lengthAdjust="spacingAndGlyphs" stroke="#000" stroke-width="0.1">Bewirtungsaufwendungen</text>
<text transform="translate(766.5 665) scale(1.12 1)" font-size="11" fill="#000" text-anchor="end" stroke="#000" stroke-width="0.1">€</text>
<text transform="translate(757 665) scale(0.97 1)" font-size="11" fill="#000" text-anchor="end" stroke="#000" stroke-width="0.1">38,50</text>
<text transform="translate(131 713) scale(0.97 1)" font-size="11" fill="#000" text-anchor="end" stroke="#000" stroke-width="0.1">55</text>
<text x="136" y="713" font-size="11" fill="#000" textLength="180.8" lengthAdjust="spacingAndGlyphs" stroke="#000" stroke-width="0.1">Verpflegungsmehraufwendungen</text>
<text transform="translate(766.5 713) scale(1.12 1)" font-size="11" fill="#000" text-anchor="end" stroke="#000" stroke-width="0.1">€</text>
<text transform="translate(757 713) scale(0.97 1)" font-size="11" fill="#000" text-anchor="end" stroke="#000" stroke-width="0.1">93,60</text>
<text transform="translate(131 729) scale(0.97 1)" font-size="11" fill="#000" text-anchor="end" stroke="#000" stroke-width="0.1">56</text>
<text x="136" y="729" font-size="11" fill="#000" textLength="265.3" lengthAdjust="spacingAndGlyphs" stroke="#000" stroke-width="0.1">Aufwendungen für ein häusliches Arbeitszimmer</text>
<text transform="translate(766.5 729) scale(1.12 1)" font-size="11" fill="#000" text-anchor="end" stroke="#000" stroke-width="0.1">€</text>
<text transform="translate(757 729) scale(0.97 1)" font-size="11" fill="#000" text-anchor="end" stroke="#000" stroke-width="0.1">225,00</text>
<text transform="translate(131 745) scale(0.97 1)" font-size="11" fill="#000" text-anchor="end" stroke="#000" stroke-width="0.1">59</text>
<text x="136" y="745" font-size="11" fill="#000" textLength="98.8" lengthAdjust="spacingAndGlyphs" stroke="#000" stroke-width="0.1">Kfz: Leasingkosten</text>
<text transform="translate(766.5 745) scale(1.12 1)" font-size="11" fill="#000" text-anchor="end" stroke="#000" stroke-width="0.1">€</text>
<text transform="translate(745 745) scale(0.97 1)" font-size="11" fill="#000" text-anchor="end" stroke="#000" stroke-width="0.1">-</text>
<text transform="translate(131 761) scale(0.97 1)" font-size="11" fill="#000" text-anchor="end" stroke="#000" stroke-width="0.1">60</text>
<text x="136" y="761" font-size="11" fill="#000" textLength="173.5" lengthAdjust="spacingAndGlyphs" stroke="#000" stroke-width="0.1">Kfz: Steuern, Versicherung, Maut</text>
<text transform="translate(766.5 761) scale(1.12 1)" font-size="11" fill="#000" text-anchor="end" stroke="#000" stroke-width="0.1">€</text>
<text transform="translate(757 761) scale(0.97 1)" font-size="11" fill="#000" text-anchor="end" stroke="#000" stroke-width="0.1">1.100,00</text>
<text transform="translate(131 777) scale(0.97 1)" font-size="11" fill="#000" text-anchor="end" stroke="#000" stroke-width="0.1">61</text>
<text x="136" y="777" font-size="11" fill="#000" textLength="168.5" lengthAdjust="spacingAndGlyphs" stroke="#000" stroke-width="0.1">Sonstige tatsächliche Fahrtkosten</text>
<text transform="translate(766.5 777) scale(1.12 1)" font-size="11" fill="#000" text-anchor="end" stroke="#000" stroke-width="0.1">€</text>
<text transform="translate(757 777) scale(0.97 1)" font-size="11" fill="#000" text-anchor="end" stroke="#000" stroke-width="0.1">600,00</text>
<text x="602.5" y="681" font-size="11" fill="#000" textLength="54" lengthAdjust="spacingAndGlyphs" stroke="#000" stroke-width="0.1">abziehbar</text>
<text x="602.5" y="697" font-size="11" fill="#000" textLength="84" lengthAdjust="spacingAndGlyphs" stroke="#000" stroke-width="0.1">nicht abziehbar</text>
<text transform="translate(847.5 681) scale(1.12 1)" font-size="11" fill="#000" text-anchor="end" stroke="#000" stroke-width="0.1">€</text>
<text transform="translate(838.5 681) scale(0.97 1)" font-size="11" fill="#000" text-anchor="end" stroke="#000" stroke-width="0.1">38,50</text>
<text transform="translate(847.5 697) scale(1.12 1)" font-size="11" fill="#000" text-anchor="end" stroke="#000" stroke-width="0.1">€</text>
<text transform="translate(838.5 697) scale(0.97 1)" font-size="11" fill="#000" text-anchor="end" stroke="#000" stroke-width="0.1">16,50</text>
<text x="28" y="152" font-size="11" fill="#000" textLength="66.5" lengthAdjust="spacingAndGlyphs" stroke="#000" stroke-width="0.1">Zeilen-Nr. in</text>
<text x="28" y="168" font-size="11" fill="#000" textLength="92" lengthAdjust="spacingAndGlyphs" stroke="#000" stroke-width="0.1">Anlage EÜR-2017</text>
<text x="136" y="159" font-size="11" fill="#000" textLength="224" lengthAdjust="spacingAndGlyphs" stroke="#000" stroke-width="0.1">Bezeichnung der Felder in der Anlage EÜR</text>
<text transform="translate(772 159) scale(1.12 1)" font-size="11" fill="#000" text-anchor="middle" stroke="#000" stroke-width="0.1">Betrag</text>
<path d="M128 139 L133 139 L133 144 Z" fill="#c00000"/>
<rect x="25" y="137" width="108" height="34" fill="none" stroke="#217346" stroke-width="2" shape-rendering="crispEdges"/>
<rect x="130" y="169" width="5" height="5" fill="#217346" />
<rect x="129" y="168" width="1" height="6" fill="#fff" />
<rect x="129" y="168" width="6" height="1" fill="#fff" />
<rect x="1265" y="118" width="19" height="653" fill="#e6e6e6" />
<rect x="1268" y="121" width="15" height="650" fill="#dadada" />
<rect x="1268" y="120" width="15" height="15" fill="#ababab" />
<rect x="1269" y="121" width="13" height="13" fill="#f7f7f7" />
<path d="M1271 130h9l-4.5-4.5z" fill="#6d6d6d"/>
<rect x="1268" y="135" width="15" height="276" fill="#ababab" />
<rect x="1269" y="136" width="13" height="274" fill="#f4f4f4" />
<rect x="1268" y="756" width="15" height="15" fill="#c6c6c6" />
<rect x="1269" y="757" width="13" height="13" fill="#f7f7f7" />
<path d="M1271 761.5h9l-4.5 4.5z" fill="#6d6d6d"/>
<rect x="1" y="772" width="1283" height="27" fill="#e6e6e6" />
<path d="M32 780v8.5l-4.8-4.25z" fill="#217346"/>
<path d="M56 780v9l4.5-4.5z" fill="#bdbdbd"/>
<rect x="81" y="787" width="2" height="2" fill="#1d4a30" />
<rect x="85" y="787" width="2" height="2" fill="#1d4a30" />
<rect x="89" y="787" width="2" height="2" fill="#1d4a30" />
<rect x="100" y="775" width="1" height="20" fill="#bdbdbd" />
<rect x="174" y="775" width="1" height="20" fill="#bdbdbd" />
<rect x="301" y="775" width="1" height="20" fill="#bdbdbd" />
<rect x="402" y="775" width="1" height="20" fill="#bdbdbd" />
<rect x="516" y="775" width="1" height="20" fill="#bdbdbd" />
<rect x="588" y="775" width="1" height="20" fill="#bdbdbd" />
<rect x="686" y="775" width="1" height="20" fill="#bdbdbd" />
<rect x="770" y="775" width="1" height="20" fill="#bdbdbd" />
<rect x="103" y="773" width="69" height="23" fill="#f2f200" />
<text x="137.5" y="788.5" font-size="12" fill="#000" text-anchor="middle" textLength="45" lengthAdjust="spacingAndGlyphs" >ESt.Zahl</text>
<rect x="177" y="773" width="122" height="23" fill="#f2f200" />
<text x="238.0" y="788.5" font-size="12" fill="#000" text-anchor="middle" textLength="92" lengthAdjust="spacingAndGlyphs" >Sonst.Leist.Entn.</text>
<rect x="304" y="773" width="96" height="23" fill="#f2f200" />
<text x="352.0" y="788.5" font-size="12" fill="#000" text-anchor="middle" textLength="72" lengthAdjust="spacingAndGlyphs" >Kfz-Nutzung</text>
<rect x="405" y="773" width="109" height="23" fill="#f2f200" />
<text x="459.5" y="788.5" font-size="12" fill="#000" text-anchor="middle" textLength="84" lengthAdjust="spacingAndGlyphs" >Arbeitszimmer</text>
<rect x="519" y="773" width="67" height="23" fill="#0b6fc6" />
<text x="552.5" y="788.5" font-size="12" fill="#fff" text-anchor="middle" textLength="45" lengthAdjust="spacingAndGlyphs" >pr.Ausg</text>
<rect x="591" y="773" width="93" height="23" fill="#92d050" />
<text x="637.5" y="788.5" font-size="12" fill="#000" text-anchor="middle" textLength="68" lengthAdjust="spacingAndGlyphs" >USt.Voranm</text>
<rect x="689" y="773" width="79" height="23" fill="#92d050" />
<text x="728.5" y="788.5" font-size="12" fill="#000" text-anchor="middle" textLength="56" lengthAdjust="spacingAndGlyphs" >USt.Erklär</text>
<rect x="773" y="773" width="49" height="23" fill="#92d050" />
<text x="797.5" y="788.5" font-size="12" fill="#000" text-anchor="middle" textLength="27" lengthAdjust="spacingAndGlyphs" >BWA</text>
<rect x="824" y="771" width="48" height="26" fill="#ababab" />
<defs><linearGradient id="tg" x1="0" y1="0" x2="0" y2="1"><stop offset="0" stop-color="#f6f6f6"/><stop offset="1" stop-color="#d9eecb"/></linearGradient></defs>
<rect x="825" y="771" width="46" height="24" fill="#f6f6f6" />
<rect x="827" y="773" width="42" height="20" fill="url(#tg)" />
<rect x="824" y="794" width="48" height="2" fill="#217346" />
<text x="848" y="789" font-size="13" fill="#217346" text-anchor="middle" font-weight="bold" textLength="24" lengthAdjust="spacingAndGlyphs" >EÜR</text>
<rect x="1" y="771" width="823" height="1" fill="#a6a6a6" />
<rect x="872" y="771" width="393" height="1" fill="#a6a6a6" />
<circle cx="913" cy="785" r="7.5" fill="none" stroke="#777" stroke-width="1.2"/><path d="M913 781v8 M909 785h8" stroke="#777" stroke-width="1.6"/>
<rect x="982" y="780" width="2" height="2" fill="#bdbdbd" />
<rect x="982" y="784" width="2" height="2" fill="#bdbdbd" />
<rect x="982" y="788" width="2" height="2" fill="#bdbdbd" />
<rect x="999" y="778" width="265" height="15" fill="#dadada" />
<rect x="999" y="778" width="15" height="15" fill="#ababab" />
<rect x="1000" y="779" width="13" height="13" fill="#f7f7f7" />
<path d="M1009 781v9l-4.5-4.5z" fill="#6d6d6d"/>
<rect x="1014" y="778" width="210" height="15" fill="#ababab" />
<rect x="1015" y="779" width="208" height="13" fill="#f4f4f4" />
<rect x="1249" y="778" width="15" height="15" fill="#ababab" />
<rect x="1250" y="779" width="13" height="13" fill="#f7f7f7" />
<path d="M1254 781v9l4.5-4.5z" fill="#6d6d6d"/>
<rect x="1" y="799" width="1283" height="21" fill="#f0f0f0" />
<rect x="1" y="799" width="1283" height="1" fill="#c6c6c6" />
<rect x="0" y="819" width="1285" height="1" fill="#c6c6c6" />
<text x="7.5" y="814" font-size="12.5" fill="#333" textLength="30" lengthAdjust="spacingAndGlyphs" >Bereit</text>
<rect x="986" y="800" width="38" height="19" fill="#c8c8c8" />
<g stroke="#6d6d6d" fill="none" shape-rendering="crispEdges"><rect x="998.5" y="803.5" width="12" height="12"/><path d="M1002.5 803v13 M1006.5 803v13 M998 807.5h13 M998 811.5h13"/></g>
<g stroke="#6d6d6d" fill="none" shape-rendering="crispEdges"><rect x="1036.5" y="803.5" width="13" height="12"/><rect x="1039.5" y="805.5" width="7" height="8"/><path d="M1041 807.5h4 M1041 809.5h4 M1041 811.5h4"/></g>
<g stroke="#6d6d6d" fill="none" shape-rendering="crispEdges"><rect x="1074.5" y="803.5" width="13" height="12"/><path d="M1074 809.5h8.5v-6 M1078.5 803v6"/></g>
<rect x="1105" y="809" width="6" height="2" fill="#6d6d6d" />
<rect x="1116" y="809" width="99" height="1" fill="#b4b4b4" />
<rect x="1163" y="804" width="4" height="11" fill="#6d6d6d" />
<rect x="1219" y="809" width="8" height="2" fill="#6d6d6d" />
<rect x="1222" y="806" width="2" height="8" fill="#6d6d6d" />
<text x="1236" y="814" font-size="12.5" fill="#333" textLength="30" lengthAdjust="spacingAndGlyphs" >100 %</text>
</svg></body></html>
